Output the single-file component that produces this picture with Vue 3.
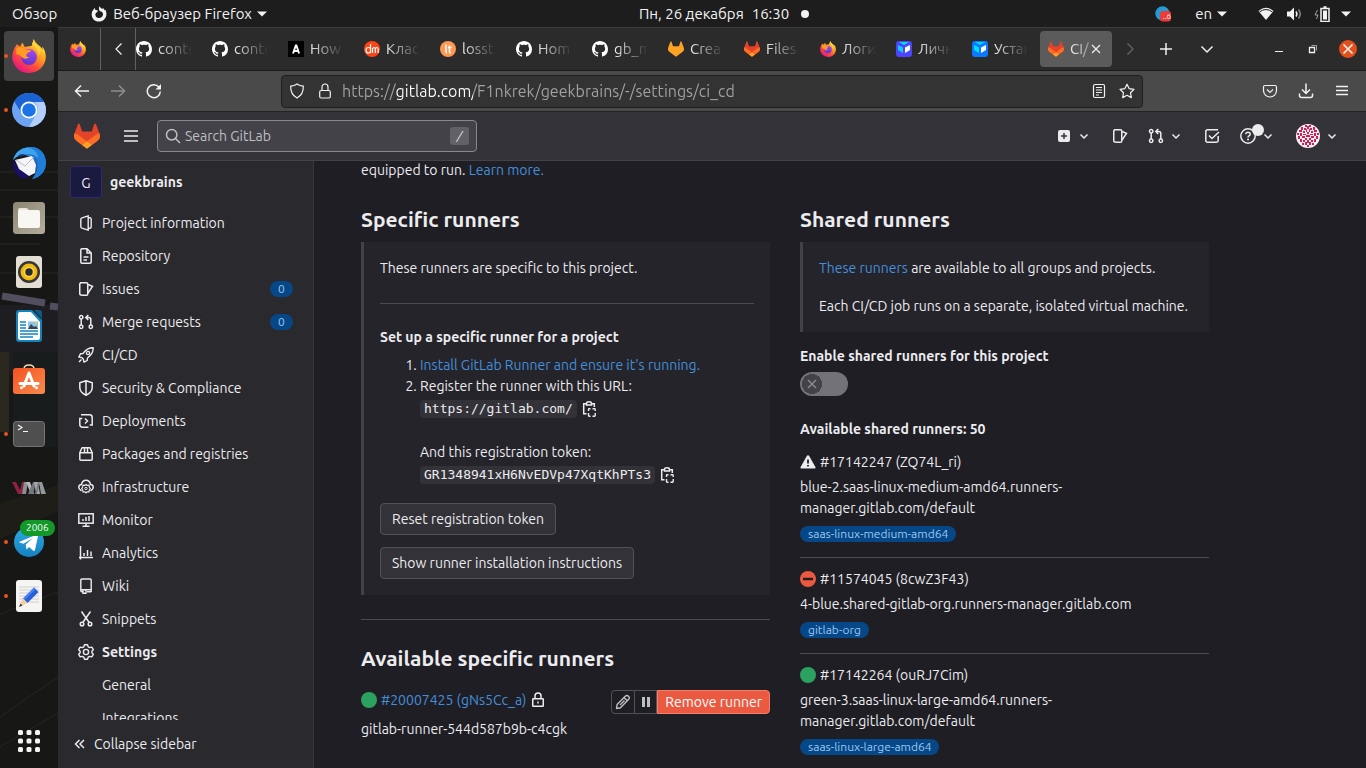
<script setup>
import { h, ref } from 'vue'

const Icon = (props) =>
  h('svg', { class: 'icon', width: props.size || 16, height: props.size || 16, 'aria-hidden': 'true' }, [
    h('use', { href: '#' + props.name })
  ])

const tabs = [
  { icon: 'github', title: 'conte' },
  { icon: 'github', title: 'conte' },
  { icon: 'letter-a', title: 'How' },
  { icon: 'dm', title: 'Клас' },
  { icon: 'lt', title: 'losst.' },
  { icon: 'github', title: 'Hom' },
  { icon: 'github', title: 'gb_m' },
  { icon: 'fox-flat', title: 'Crea' },
  { icon: 'tanuki', title: 'Files' },
  { icon: 'firefox', title: 'Логи' },
  { icon: 'cube-violet', title: 'Личн' },
  { icon: 'cube-blue', title: 'Устан' },
  { icon: 'tanuki', title: 'CI/', active: true }
]

const dock = [
  { icon: 'firefox', label: 'Firefox', running: true, active: true },
  { icon: 'chromium', label: 'Chromium', running: true },
  { icon: 'thunderbird', label: 'Thunderbird' },
  { icon: 'files', label: 'Files' },
  { icon: 'rhythmbox', label: 'Rhythmbox' },
  { icon: 'writer', label: 'Writer' },
  { icon: 'store', label: 'Software' },
  { icon: 'terminal', label: 'Terminal', running: true },
  { icon: 'vmm', label: 'Virtual machines' },
  { icon: 'telegram', label: 'Telegram', running: true, count: '2006' },
  { icon: 'editor', label: 'Text editor', running: true }
]

const menu = [
  { icon: 'project', text: 'Project information' },
  { icon: 'doc-text', text: 'Repository' },
  { icon: 'issues', text: 'Issues', count: 0 },
  { icon: 'git-merge', text: 'Merge requests', count: 0 },
  { icon: 'rocket', text: 'CI/CD' },
  { icon: 'shield', text: 'Security & Compliance' },
  { icon: 'deployments', text: 'Deployments' },
  { icon: 'package', text: 'Packages and registries' },
  { icon: 'cloud-gear', text: 'Infrastructure' },
  { icon: 'monitor', text: 'Monitor' },
  { icon: 'chart', text: 'Analytics' },
  { icon: 'book', text: 'Wiki' },
  { icon: 'snippet', text: 'Snippets' },
  { icon: 'settings', text: 'Settings', current: true },
  { text: 'General' },
  { text: 'Integrations' }
]

const runners = [
  { icon: 'warning', id: '#17142247 (ZQ74L_ri)', name: 'blue-2.saas-linux-medium-amd64.runners-manager.gitlab.com/default', tag: 'saas-linux-medium-amd64' },
  { icon: 'offline', id: '#11574045 (8cwZ3F43)', name: '4-blue.shared-gitlab-org.runners-manager.gitlab.com', tag: 'gitlab-org' },
  { icon: 'online', id: '#17142264 (ouRJ7Cim)', name: 'green-3.saas-linux-large-amd64.runners-manager.gitlab.com/default', tag: 'saas-linux-large-amd64' }
]

const url = ref('https://gitlab.com/F1nkrek/geekbrains/-/settings/ci_cd')
const search = ref('')
const shared = ref(false)
</script>

<template>
  <svg class="sheet" aria-hidden="true">
    <defs>
      <linearGradient id="ff-body" x1="0.85" y1="0.1" x2="0.2" y2="0.95">
        <stop offset="0" stop-color="#ffe83a" /><stop offset="0.35" stop-color="#ff9a1f" /><stop offset="0.65" stop-color="#ff4a3d" /><stop offset="1" stop-color="#e3118a" />
      </linearGradient>
      <linearGradient id="ff-core" x1="0.6" y1="0" x2="0.4" y2="1">
        <stop offset="0" stop-color="#a64bf4" /><stop offset="1" stop-color="#5b35c9" />
      </linearGradient>
      <linearGradient id="tb-body" x1="0" y1="0" x2="1" y2="1">
        <stop offset="0" stop-color="#2b9be8" /><stop offset="1" stop-color="#1a3f9c" />
      </linearGradient>
      <linearGradient id="store-body" x1="0" y1="0" x2="1" y2="1">
        <stop offset="0" stop-color="#f4511e" /><stop offset="1" stop-color="#f78d4f" />
      </linearGradient>
      <linearGradient id="tg-body" x1="0" y1="0" x2="0" y2="1">
        <stop offset="0" stop-color="#2fa8e0" /><stop offset="1" stop-color="#1482c2" />
      </linearGradient>
      <linearGradient id="files-body" x1="0" y1="0" x2="1" y2="1">
        <stop offset="0" stop-color="#8d8573" /><stop offset="1" stop-color="#b5ad9c" />
      </linearGradient>
    </defs>

    <symbol id="firefox" class="art" viewBox="0 0 32 32">
      <path fill="url(#ff-body)" d="M20.5 0c-.6 2.700-1.600 4-1.800 6.300L12 7.500 10 3.500C8.500 4.600 8 6 7.800 7.300L4.600 5C2.300 8.200.2 12.500.2 17A15.700 15.200 0 0 0 16 32c8.700 0 15.800-6.700 15.800-15.200 0-3-.8-6-2.300-8.300l-1-1.500.3 3C27.500 6.500 22 5 20.500 0Z" />
      <circle cx="16" cy="17" r="7.500" fill="url(#ff-core)" />
      <path fill="#ff9b22" d="M4 9c4-2.500 7-1 9.500 1.200l4.500.3c-.5 2-4 2.300-4.500 4.300-.3 1.600 1 2.600 3 2.400-3.500 2.600-7 1-8.500-1.700L4 14Z" />
      <path fill="#ffd23b" d="M19 5c3.500 3 6 6 6 11 3-4 2-8-1-10.500C21.500 3.500 20.500 1.500 20.500 0Z" />
    </symbol>
    <symbol id="chromium" class="art" viewBox="0 0 34 34">
      <circle cx="17" cy="17" r="17" fill="#6da3f3" />
      <path fill="#1b62d4" d="M2.300 8.500A17 17 0 0 1 32 9H17a8 8 0 0 0-7.600 11Z" />
      <path fill="#b3cffa" d="M32 9a17 17 0 0 1-15 25l7-12.500A8.400 8.400 0 0 0 22 9Z" />
      <circle cx="17" cy="17" r="8.500" fill="#fff" /><circle cx="17" cy="17" r="6.800" fill="#1a73e8" />
    </symbol>
    <symbol id="thunderbird" class="art" viewBox="0 0 34 34">
      <path fill="url(#tb-body)" d="M4 9C7 3 14 0 19 0c9 0 15 7 15 16 0 8-6 15-14 16 4-4 5-12 1-18C17 8 10 6 4 9Z" />
      <path fill="#1f7fd8" d="M4 9C9 2 22 3 25 13c2 8-1 15-5 19 9-1 14-9 14-16C34 7 28 0 19 0 13 0 7 3 4 9Z" />
      <path fill="#191063" d="M1 12c-2 9 3 17 10 20l9-4L4 18Z" />
      <path fill="#f5f5f7" d="M3 13 20 9l4 9-1 8-6 3-10-7Z" /><path d="m4 13 9 6 9-9" fill="none" stroke="#bcbcc8" />
      <path fill="#3fa2ee" d="M1 13C3 5 10 0 17 1c6 1 9 6 9 10C21 6 9 5 1 13Z" />
      <path fill="#1b2f70" d="M6 9c2-2 5-2 7-1-2 2-5 2-7 1Z" />
    </symbol>
    <symbol id="files" class="art" viewBox="0 0 34 34">
      <rect x="1" y="1" width="32" height="32" rx="3.500" fill="url(#files-body)" />
      <path fill="#eae6dc" d="M6 9q0-2 2-2h6q1.500 0 2 1l1 2H6Z" /><rect x="6" y="9" width="22" height="18" rx="2" fill="#f8f7f4" />
    </symbol>
    <symbol id="rhythmbox" class="art" viewBox="0 0 34 34">
      <rect x="4" y="1" width="26" height="32" rx="3" fill="#e3ded3" /><circle cx="17" cy="17" r="11" fill="#333539" />
      <circle cx="17" cy="17" r="8.500" fill="#f2b90c" /><circle cx="17" cy="17" r="5.500" fill="#f7cf52" /><circle cx="17" cy="17" r="3.700" fill="#282b30" />
    </symbol>
    <symbol id="writer" class="art" viewBox="-1 -1 34 34">
      <path fill="#1582b9" d="M6 0h13l10 10v19q0 3-3 3H6q-3 0-3-3V3q0-3 3-3Z" /><path fill="#0d5c86" d="M21 0h5q3 0 3 3v6Z" />
      <path fill="#fbfdfe" d="M5 4q0-2 2-2h11l9 10v16q0 2-2 2H7q-2 0-2-2Z" />
      <path d="M7 12h6M7 15h6M7 18h6M7 21h18M7 24h18M7 27h13" stroke="#1582b9" stroke-width="1.500" /><rect x="15" y="11.500" width="10" height="7.500" fill="#86c7ea" /><path fill="#3d454c" d="m15 19 3-5 3 3 2-1 2 3Z" />
      <circle cx="23" cy="13" r="1.200" fill="#f1c83a" />
    </symbol>
    <symbol id="store" class="art" viewBox="-1 0 34 34">
      <path d="M11 6q0-4 5-4t5 4" fill="none" stroke="#f5d9a8" stroke-width="1.500" /><rect y="5" width="32" height="26" rx="3" fill="url(#store-body)" />
      <path d="m11 23 5-13 5 13M7 20.500h18" fill="none" stroke="#fff" stroke-width="3" stroke-linecap="round" stroke-linejoin="round" /><path d="M9 23.500 8 26M23 23.500l1 2.500" stroke="#fff" stroke-width="2.500" />
    </symbol>
    <symbol id="terminal" class="art" viewBox="-1 -1 34 34">
      <rect x="0.500" y="3.500" width="31" height="25" rx="3" fill="#4f4f4f" stroke="#757575" /><path d="m5 7 4 2.500L5 12M10 13.500h5" fill="none" stroke="#f4f4f4" stroke-width="1.200" />
    </symbol>
    <symbol id="vmm" class="art" viewBox="0 0 34 34">
      <path fill="#8c2343" d="M0 11h4l4 8 2-8h4l-4 12H6Z" /><path fill="#8b8f93" d="m12 11 4 0-2 12h-4Z" /><path fill="#b4b7ba" d="m14 11 4 0 4 12h-3Z" />
      <path fill="#74787b" d="m21 11 3 0-3 12h-5Z" /><path fill="#a3a7aa" d="m22 11 4 0 2 12h-4Z" /><path fill="#75797c" d="m28 11-3 12h-2l3-12Z" /><path fill="#94989b" d="m27 11 3 0 4 12h-5Z" />
    </symbol>
    <symbol id="telegram" class="art" viewBox="-1 -1 34 34">
      <circle cx="16" cy="16" r="15" fill="url(#tg-body)" /><path fill="#fff" d="m6 16 18-7.500q1.500-.5 1 1.500l-3 14q-.4 1.500-2 .5l-4-3.500-2.500 2.500-.8-5L20 12l-9.500 5.700-4-1.200Z" />
    </symbol>
    <symbol id="editor" class="art" viewBox="-1 -1 34 34">
      <rect x="3" width="26" height="32" rx="3" fill="#f6f5f4" /><path d="M6 7h20M6 10h20M6 13h20M6 16h20M6 19h20M6 22h20" stroke="#cfcfcf" />
      <path fill="#2a5fd8" d="M21 7.500 25.500 12 14.500 23 10 18.500Z" /><path fill="#4c85f5" d="M21 7.500 22.500 9 11.500 20 10 18.500Z" /><path fill="#f3cfa0" d="m10 18.500 4.500 4.500L6 27Z" /><path fill="#333" d="m7.500 23.500 2 2L6 27Z" />
    </symbol>
    <symbol id="apps" class="art" viewBox="0 0 24 24">
      <g fill="#f4f4f4"><rect x="1" y="1" width="5" height="5" rx="1.500" /><rect x="9.500" y="1" width="5" height="5" rx="1.500" /><rect x="18" y="1" width="5" height="5" rx="1.500" /><rect x="1" y="9.500" width="5" height="5" rx="1.500" /><rect x="9.500" y="9.500" width="5" height="5" rx="1.500" /><rect x="18" y="9.500" width="5" height="5" rx="1.500" /><rect x="1" y="18" width="5" height="5" rx="1.500" /><rect x="9.500" y="18" width="5" height="5" rx="1.500" /><rect x="18" y="18" width="5" height="5" rx="1.500" /></g>
    </symbol>

    <symbol id="github" class="art" viewBox="0 0 16 16">
      <path fill="#fff" d="M8 0C3.580 0 0 3.580 0 8c0 3.540 2.290 6.530 5.470 7.590.4.070.55-.17.55-.38 0-.19-.01-.82-.01-1.490-2.010.37-2.530-.49-2.690-.94-.09-.23-.48-.94-.82-1.130-.28-.15-.68-.52-.01-.53.63-.01 1.080.58 1.230.82.72 1.210 1.870.87 2.330.66.07-.52.28-.87.51-1.070-1.780-.2-3.640-.89-3.640-3.950 0-.87.31-1.590.82-2.150-.08-.2-.36-1.020.08-2.120 0 0 .67-.21 2.200.82.64-.18 1.320-.27 2-.27s1.360.09 2 .27c1.530-1.040 2.200-.82 2.200-.82.44 1.100.16 1.920.08 2.120.51.56.82 1.270.82 2.150 0 3.070-1.870 3.750-3.650 3.950.29.25.54.73.54 1.480 0 1.070-.01 1.930-.01 2.200 0 .21.15.46.55.38A8.010 8.010 0 0 0 16 8c0-4.420-3.580-8-8-8Z" />
    </symbol>
    <symbol id="tanuki" class="art" viewBox="0 0 25 24">
      <path fill="#E24329" d="m24.507 9.500-.034-.09L21.082.562a.896.896 0 0 0-1.694.091l-2.290 7.010H7.825L5.535.653a.898.898 0 0 0-1.694-.09L.451 9.411.416 9.500a6.297 6.297 0 0 0 2.090 7.278l.012.01.03.022 5.160 3.867 2.560 1.935 1.554 1.176a1.051 1.051 0 0 0 1.268 0l1.555-1.176 2.560-1.935 5.197-3.890.014-.01A6.297 6.297 0 0 0 24.507 9.500Z" />
      <path fill="#FC6D26" d="m24.507 9.500-.034-.09a11.440 11.440 0 0 0-4.560 2.051l-7.447 5.632 4.742 3.584 5.197-3.890.014-.01A6.297 6.297 0 0 0 24.507 9.500Z" />
      <path fill="#FCA326" d="m7.707 20.677 2.560 1.935 1.555 1.176a1.051 1.051 0 0 0 1.268 0l1.555-1.176 2.560-1.935-4.743-3.584-4.755 3.584Z" />
      <path fill="#FC6D26" d="M5.010 11.461a11.430 11.430 0 0 0-4.560-2.050L.416 9.500a6.297 6.297 0 0 0 2.090 7.278l.012.01.03.022 5.160 3.867 4.745-3.584-7.444-5.632Z" />
    </symbol>
    <symbol id="fox-flat" class="art" viewBox="0 0 25 24">
      <path fill="#fca326" d="m24.507 9.500-.034-.09L21.082.562a.896.896 0 0 0-1.694.091l-2.290 7.010H7.825L5.535.653a.898.898 0 0 0-1.694-.09L.451 9.411.416 9.500a6.297 6.297 0 0 0 2.090 7.278l5.202 3.899 4.114 3.111a1.051 1.051 0 0 0 1.268 0l4.115-3.111 5.197-3.890A6.297 6.297 0 0 0 24.507 9.500Z" />
    </symbol>
    <symbol id="letter-a" class="art" viewBox="0 0 16 16">
      <rect width="16" height="16" fill="#000" /><path d="m5 12.500 2.800-8h.6l2.700 8M5.500 10h5" fill="none" stroke="#fff" stroke-width="1.900" />
    </symbol>
    <symbol id="dm" class="art" viewBox="0 0 16 16">
      <circle cx="8" cy="8" r="8" fill="#ff4313" /><path d="M6.500 3v9M6.500 8q-.5-1.500-2-1.500-2.500 0-2.500 2.700T4.500 12q1.500 0 2-1.500M8.500 12V7M8.500 8q.5-1.500 1.500-1.500t1.300 1.500v4M11.300 8q.5-1.500 1.600-1.500T14.200 8v4" fill="none" stroke="#fff" stroke-width="1.200" />
    </symbol>
    <symbol id="lt" class="art" viewBox="0 0 16 16">
      <circle cx="8" cy="8" r="8" fill="#ff9851" /><path d="M6 3.500V11q0 1 1 1M9.500 4.500V11q0 1 1.500 1M8 6.500h3.500" fill="none" stroke="#fff" stroke-width="1.500" />
    </symbol>
    <symbol id="cube-violet" class="art" viewBox="0 0 16 16">
      <rect width="16" height="16" rx="3" fill="#4b45ff" /><path fill="#00e0e8" d="M3 1h10L8 4Z" /><path fill="#12cdf0" d="m2 4 5 2.500V12L2 9Z" /><path fill="#fff" d="M9 6.500 14 4v5l-5 3Z" />
    </symbol>
    <symbol id="cube-blue" class="art" viewBox="0 0 16 16">
      <rect width="16" height="16" rx="3" fill="#0a78ff" /><path fill="#00d8f0" d="M3 1h10L8 4Z" /><path fill="#00e0f5" d="m2 4 5 2.500V12L2 9Z" /><path fill="#fff" d="M9 6.500 14 4v5l-5 3Z" />
    </symbol>
    <symbol id="firefox-mono" class="art" viewBox="0 0 16 16">
      <path fill="#f2f2f2" fill-rule="evenodd" d="M8.700 0c0 1.500 1.500 2.300 2.800 3.300l.2-1.500c1 .8 1.700 1.700 2 2.700l.8-.7c2 4.600.5 8.200-1.900 10.100-3.300 2.600-7.700 2-10-.5C.300 10.800.2 7.400 1.500 4.400l.4.700C2.300 3.500 3 2.600 4 2l.1 1.800 2.700.8c.3 1.700-1.900 1.500-2.300 3.200-.6 2.300 1 4.200 3.200 4.300 2.500.1 4.500-1.700 4.300-4.100-.1-1.900-1.500-2.500-3-2.700C7.700 4 7.500 1.700 8.700 0Z" />
    </symbol>

    <symbol id="chevron-down" viewBox="0 0 16 16"><path d="m4.500 6.500 3.500 3.500 3.500-3.500" /></symbol>
    <symbol id="chevron-left" viewBox="0 0 16 16"><path d="m10.500 2.500-5.500 5.500 5.500 5.500" /></symbol>
    <symbol id="chevron-right" viewBox="0 0 16 16"><path d="m5.500 2.500 5.500 5.500-5.500 5.500" /></symbol>
    <symbol id="chevron-wide" viewBox="0 0 16 16"><path d="m2.500 5.500 5.500 5.500 5.500-5.500" /></symbol>
    <symbol id="chevrons" viewBox="0 0 16 16"><path d="M7.500 4 3.500 8l4 4M12 4 8 8l4 4" /></symbol>
    <symbol id="plus" viewBox="0 0 16 16"><path d="M8 2v12M2 8h12" /></symbol>
    <symbol id="cross" viewBox="0 0 16 16"><path d="m4 4 8 8M12 4l-8 8" /></symbol>
    <symbol id="minus" viewBox="0 0 16 16"><path d="M4 10.500h8" stroke-width="1" /></symbol>
    <symbol id="restore" viewBox="0 0 16 16"><path d="M4.500 6.500h5v5h-5Z" stroke-width="1.300" /><path d="M6.500 4.500h5v5" stroke-opacity="0.600" stroke-width="1" /></symbol>
    <symbol id="arrow-left" viewBox="0 0 16 16"><path d="M15 8H2M7 2.500 1.500 8 7 13.500" /></symbol>
    <symbol id="arrow-right" viewBox="0 0 16 16"><path d="M1 8h13M9 2.500l5.500 5.500L9 13.500" /></symbol>
    <symbol id="reload" viewBox="0 0 16 16"><path d="M14.300 8.500A6.500 6.500 0 1 1 12.800 4" /><path d="M9.500 6.500H15V1Z" fill="currentColor" stroke="none" /></symbol>
    <symbol id="url-shield" viewBox="0 0 16 16"><path d="M8 1c2 1.500 4 2 6.300 2.200C14.500 8.500 12.500 12.500 8 15 3.500 12.500 1.500 8.500 1.700 3.200 4 3 6 2.500 8 1Z" /></symbol>
    <symbol id="url-lock" viewBox="0 0 16 16"><rect x="2.700" y="7.500" width="10.600" height="7.500" rx="1.500" /><path d="M5 7.500V4a3 3 0 0 1 6 0v3.500" /></symbol>
    <symbol id="reader" viewBox="0 0 16 16"><rect x="2.500" y="1.500" width="11" height="13" rx="1.500" /><path d="M5 4.500h6M5 7h6M5 9.500h6M5 12h3" /></symbol>
    <symbol id="star" viewBox="0 0 16 16"><path d="m8 1.200 2.100 4.400 4.900.7-3.500 3.400.8 4.900L8 12.300l-4.300 2.300.8-4.900L1 6.300l4.900-.7Z" stroke-linejoin="round" /></symbol>
    <symbol id="pocket" viewBox="0 0 16 16"><path d="M3 2.500h10q1.500 0 1.500 1.500v3.500a6.500 6.500 0 0 1-13 0V4q0-1.500 1.500-1.500Z" /><path d="M5 6.500 8 9.500l3-3" /></symbol>
    <symbol id="download" viewBox="0 0 16 16"><path d="M8 .5v9.500M4 6.500l4 4 4-4M1.500 10.500v2q0 2 2 2h9q2 0 2-2v-2" /></symbol>
    <symbol id="burger" viewBox="0 0 16 16"><path d="M1 3h14M1 8h14M1 13h14" /></symbol>
    <symbol id="menu-lines" viewBox="0 0 16 16"><path d="M2 3.500h12M2 7.500h12M2 11.500h12" /></symbol>
    <symbol id="search" viewBox="0 0 16 16"><circle cx="6.700" cy="6.700" r="5.200" /><path d="m10.500 10.500 4.500 4.500" /></symbol>

    <symbol id="plus-square" viewBox="0 0 16 16"><rect x="2" y="2" width="12" height="12" rx="2" fill="#ececef" stroke="none" /><path d="M8 5v6M5 8h6" stroke="#333238" /></symbol>
    <symbol id="issues" viewBox="0 0 16 16"><path d="M2.500 1.750h6q1.250 0 1.250 1.250v10q0 1.250-1.250 1.250h-4q-2.750 0-2.750-1.500V3Z" /><path d="M10 3.500 14.500 5.300 10 12" /></symbol>
    <symbol id="git-merge" viewBox="0 0 16 16"><circle cx="3.200" cy="3.200" r="1.700" /><circle cx="3.200" cy="12.800" r="1.700" /><circle cx="12.800" cy="12.800" r="1.700" /><path d="M3.200 5v6M12.800 11V5.500q0-2-2-2H8M10.300 1 7.800 3.500 10.300 6" /></symbol>
    <symbol id="todo" viewBox="0 0 16 16"><path d="M14.200 8v4.500q0 1.700-1.700 1.700h-9q-1.700 0-1.700-1.700v-9q0-1.700 1.700-1.700h10.500" /><path d="m5 7.500 3 3L15 4" /></symbol>
    <symbol id="question" viewBox="0 0 16 16"><circle cx="8" cy="8" r="7.200" /><path d="M5.800 6.300q.2-2 2.200-2 2.200 0 2.200 1.900 0 1-1.200 1.700-1 .6-1 1.500" /><circle cx="8" cy="11.500" r="1" fill="currentColor" stroke="none" /></symbol>
    <symbol id="identicon" class="art" viewBox="0 0 24 24">
      <circle cx="12" cy="12" r="12" fill="#fbeff3" />
      <path fill="#cc1f55" d="M9 1h2v2H9ZM13 1h2v2h-2ZM11 2h2v3h-2ZM5 3h2v3H5ZM17 3h2v3h-2ZM8 4h2v2H8ZM14 4h2v2h-2ZM10 5h1v3h-1ZM13 5h1v3h-1ZM3 6h3v2H3ZM18 6h3v2h-3ZM7 7h2v2H7ZM15 7h2v2h-2ZM1 9h2v2H1ZM21 9h2v2h-2ZM4 9h2v3H4ZM18 9h2v3h-2ZM7 10h3v1H7ZM14 10h3v1h-3ZM11 8h2v2h-2ZM10 11h4v2h-4ZM2 12h2v3H2ZM20 12h2v3h-2ZM6 12h3v2H6ZM15 12h3v2h-3ZM9 14h2v2H9ZM13 14h2v2h-2ZM4 15h2v3H4ZM18 15h2v3h-2ZM7 16h2v2H7ZM15 16h2v2h-2ZM11 16h2v3h-2ZM9 18h2v3H9ZM13 18h2v3h-2ZM6 19h2v2H6ZM16 19h2v2h-2ZM11 21h2v2h-2Z" />
    </symbol>

    <symbol id="project" viewBox="0 0 16 16"><path d="M10.200.9v14.200L4 13.200q-1.200-.4-1.200-1.600V4.400Q2.800 3.200 4 2.800ZM10.200 2.700h1.500q1.500 0 1.500 1.500v7.600q0 1.500-1.500 1.500h-1.500" stroke-width="1.400" /></symbol>
    <symbol id="doc-text" viewBox="0 0 16 16"><path d="M9 .8H4Q2.800.8 2.800 2v12q0 1.200 1.200 1.200h8q1.200 0 1.200-1.200V5ZM9 .8V5h4.200M5.500 9h5M5.500 12H9" /></symbol>
    <symbol id="rocket" viewBox="0 0 16 16"><path d="M15.200.8C10.500.6 8 2.500 5 6.500L2.500 6.800.8 10l2.900.6L5.400 12.300 6 15.200l3.200-1.700.3-2.500c4-3 5.900-5.500 5.700-10.200ZM1 15l2.500-2.500" stroke-width="1.400" stroke-linejoin="round" /><circle cx="10" cy="6" r="1.600" stroke-width="1.300" /></symbol>
    <symbol id="shield" viewBox="0 0 16 16"><path d="m8 .8 6.200 2v4.700q0 4.800-6.200 7.700-6.200-2.900-6.200-7.700V2.800ZM8 1v14" stroke-linejoin="round" /></symbol>
    <symbol id="deployments" viewBox="0 0 16 16"><path d="M3 1.800h8.500q2.700 0 2.700 2.700V12h-2.500M10.500 14.200h-6q-2.700 0-2.700-2.700V5.500h2.500M7 5.500 9.500 8 7 10.500" /></symbol>
    <symbol id="package" viewBox="0 0 16 16"><path d="M4 1.800h8l2.200 5v6.400q0 1-1 1H2.800q-1 0-1-1V6.800ZM1.800 6.800h12.400M6.500 2v4.500M9.500 2v4.500" stroke-linejoin="round" /></symbol>
    <symbol id="cloud-gear" viewBox="0 0 16 16"><path d="M3 11.500C-.5 9.500.5 5.500 3.500 5.500 4 2.500 6 1.200 8 1.200s4 1.300 4.500 4.300c3 0 4 4 .5 6" stroke-linecap="round" /><path d="m8 5.500 1 .9 2-.2.300 1.800 1 1.500-1 1.500-.3 1.900-2-.1-1 1-1-1-2 .1-.3-1.900-1-1.500 1-1.500L5 6.200l2 .2Z" stroke-width="1.200" /><circle cx="8" cy="9.500" r="1.200" stroke-width="1" /></symbol>
    <symbol id="monitor" viewBox="0 0 16 16"><rect x="0.800" y="1.800" width="14.400" height="9.400" /><path d="M8 11v3M4.500 14.200h7M5 7v2M8 5v4M11 4v5" /></symbol>
    <symbol id="chart" viewBox="0 0 16 16"><path d="M2.500 1v13.500M1 12.500h14M6 8v3M9.500 5v6M13 6.500V11" /></symbol>
    <symbol id="book" viewBox="0 0 16 16"><path d="M4 1h8q1.200 0 1.200 1.200v9.600H4q-1.200 0-1.200 1t1.200 1h1M2.800 13V2.200Q2.800 1 4 1M9 13.800h4.200M13.200 11v3M5 12v4l1.500-1L8 16v-4" stroke-width="1.400" /></symbol>
    <symbol id="snippet" viewBox="0 0 16 16"><circle cx="4" cy="13" r="1.800" /><circle cx="12" cy="13" r="1.800" /><path d="m3.500.5 7.700 11M12.500.5 4.800 11.500" /></symbol>
    <symbol id="settings" viewBox="0 0 16 16"><path d="M6.500.8h3l.7 2 1.500.8 2.100-.5 1.500 2.600L13.900 7.200v1.600l1.400 1.500-1.500 2.600-2.100-.5-1.500.8-.7 2h-3l-.7-2-1.500-.8-2.100.5L.7 10.300 2.100 8.800V7.200L.7 5.700l1.500-2.600 2.100.5 1.500-.8Z" stroke-width="1.400" stroke-linejoin="round" /><circle cx="8" cy="8" r="2.600" stroke-width="1.400" /></symbol>
    <symbol id="copy" viewBox="0 0 16 16"><path d="M5 2.700H2.700v10H5.500M10.500 2.700h2.800V6M5.500 4V2.500q0-1.700 2.500-1.700t2.500 1.700V4Z" /><path d="M7.500 10V8.500q0-.7.700-.7H9.500M11.500 7.800h2q.7 0 .7.700V10M14.200 12v2.500q0 .7-.7.700h-2M9.500 15.200H8.200q-.7 0-.7-.7V12" stroke-width="1.400" /></symbol>
    <symbol id="lock" viewBox="0 0 16 16"><rect x="2.750" y="6.750" width="10.500" height="7.500" rx="0.500" /><path d="M5 6.500V4a3 3 0 0 1 6 0v2.500M8 9.500v2" /></symbol>
    <symbol id="pencil" viewBox="0 0 16 16"><path d="m1.500 14.500.6-4L10.500 2q1.500-1.300 3 .2t.2 3L5.500 13.800ZM9 3.500 12.500 7M5 11l4.500-4.500" stroke-width="1.400" stroke-linejoin="round" /></symbol>
    <symbol id="pause" viewBox="0 0 16 16"><path d="M5.500 3v10M10.500 3v10" stroke-width="3" /></symbol>
    <symbol id="warning" viewBox="0 0 16 16"><path d="M8 1.200q.8 0 1.200.7l6.200 11q.8 1.600-1 1.600H1.600q-1.800 0-1-1.600l6.200-11Q7.200 1.200 8 1.200Z" fill="#ececef" stroke="none" /><path d="M8 5.500v4M8 11v1.600" stroke="#1f1e24" stroke-width="1.800" /></symbol>
    <symbol id="offline" viewBox="0 0 16 16"><circle cx="8" cy="8" r="8" fill="#ec5941" stroke="none" /><path d="M3 8h10" stroke="#1f1e24" stroke-width="2.500" /></symbol>
    <symbol id="online" viewBox="0 0 16 16"><circle cx="8" cy="8" r="8" fill="#2da160" stroke="none" /></symbol>

    <symbol id="tray-chat" viewBox="0 0 16 16"><circle cx="7.500" cy="7.500" r="7.200" fill="#239bd7" stroke="none" /><rect x="5" y="5" width="11" height="10.500" rx="3" fill="#ef3b38" stroke="none" /></symbol>
    <symbol id="wifi" viewBox="0 0 16 16"><path d="M.5 5Q8-1.500 15.500 5L8 14Z" fill="#f2f2f2" stroke="none" /><path d="M1.500 6Q8 1 14.500 6" stroke="#1d1d1d" stroke-width="1" /></symbol>
    <symbol id="volume" viewBox="0 0 16 16"><path d="M1 5.500h3L8 1.500v13l-4-4H1Z" fill="#f2f2f2" stroke="none" /><path d="M10 5.500q1.800 2.500 0 5" /><path d="M12.500 3.500q3.500 4.500 0 9" stroke-opacity="0.500" /></symbol>
    <symbol id="battery" viewBox="0 0 16 16"><path d="M7 2.500h8v13H7ZM9.500 1h3" /><rect x="9" y="4.500" width="4" height="9" fill="#f2f2f2" stroke="none" /><path d="m3.500 4-2.500 5h3L2.500 13" stroke-width="1" stroke-opacity="0.600" /></symbol>
    <symbol id="caret" viewBox="0 0 16 16"><path d="M3 5.500h10l-5 5Z" fill="#f2f2f2" stroke="none" /></symbol>
  </svg>

  <div class="desktop">
    <header class="topbar">
      <div class="topbar-left">
        <button class="plain">Обзор</button>
        <button class="plain app-menu"><Icon name="firefox-mono" />Веб-браузер Firefox<Icon name="caret" /></button>
      </div>
      <button class="plain clock"><span>Пн, 26 декабря</span><span>16:30</span><i class="clock-dot"></i></button>
      <div class="tray">
        <span class="tray-chat"><Icon name="tray-chat" /><small>..6</small></span>
        <button class="plain lang">en<Icon name="caret" /></button>
        <button class="plain status" aria-label="System"><Icon name="wifi" /><Icon name="volume" /><Icon name="battery" /><Icon name="caret" /></button>
      </div>
    </header>

    <div class="workspace">
      <nav class="dock" aria-label="Dock">
        <svg class="wallpaper" viewBox="0 0 58 741" preserveAspectRatio="none" aria-hidden="true">
          <rect width="58" height="741" fill="#171716" />
          <path d="M0 145h58M0 163h58M0 190h58M0 217h40M0 246h58" stroke="#2b2922" />
          <path d="M0 278h58v70H0Z" fill="#1e1e22" /><path d="m2 269 43 7M50 279l8 1" stroke="#524e5f" stroke-width="7" />
          <path d="M0 325h9v80H0Z" fill="#2b2820" /><path d="M13 325h45v95H13Z" fill="#191c1c" />
          <path d="m0 476 58-18v26L0 512Z" fill="#1f1d17" /><path d="m0 587 58-22M0 690l58-40M0 720l58-34" stroke="#262522" />
        </svg>
        <button v-for="item in dock" :key="item.icon" class="dock-item" :class="{ active: item.active }" :aria-label="item.label">
          <i v-if="item.running" class="running"></i>
          <Icon :name="item.icon" :size="34" />
          <span v-if="item.count" class="dock-count">{{ item.count }}</span>
        </button>
        <button class="dock-item dock-apps" aria-label="Applications"><Icon name="apps" :size="24" /></button>
      </nav>

      <div class="browser">
        <div class="tabbar">
          <button class="pinned" aria-label="Firefox"><Icon name="firefox" /></button>
          <button class="scroll-left" aria-label="Scroll left"><Icon name="chevron-left" class="thin" /></button>
          <div class="tab-window">
            <div class="tabs" role="tablist">
              <div v-for="(tab, i) in tabs" :key="i" class="tab" :class="{ active: tab.active }">
                <button class="tab-main" role="tab"><Icon :name="tab.icon" /><span class="tab-title">{{ tab.title }}</span></button>
                <button v-if="tab.active" class="tab-close" aria-label="Close tab"><Icon name="cross" class="thin" /></button>
              </div>
            </div>
          </div>
          <button class="tool dim" aria-label="Scroll right"><Icon name="chevron-right" class="thin" /></button>
          <button class="tool" aria-label="New tab"><Icon name="plus" /></button>
          <button class="tool tool-wide" aria-label="List tabs"><Icon name="chevron-wide" /></button>
          <div class="window-buttons">
            <button aria-label="Minimise"><Icon name="minus" /></button>
            <button aria-label="Restore"><Icon name="restore" /></button>
            <button class="close" aria-label="Close"><Icon name="cross" :size="18" /></button>
          </div>
        </div>

        <div class="toolbar">
          <div class="nav-buttons">
            <button class="plain" aria-label="Back"><Icon name="arrow-left" /></button>
            <button class="plain faded" aria-label="Forward"><Icon name="arrow-right" /></button>
            <button class="plain" aria-label="Reload"><Icon name="reload" /></button>
          </div>
          <div class="urlbar">
            <Icon name="url-shield" class="thin" /><Icon name="url-lock" class="thin" />
            <input v-model="url" class="url" aria-label="Address" spellcheck="false" />
            <Icon name="reader" class="thin" /><Icon name="star" class="thin" />
          </div>
          <div class="toolbar-right">
            <button class="plain" aria-label="Pocket"><Icon name="pocket" class="thin" /></button>
            <button class="plain" aria-label="Downloads"><Icon name="download" /></button>
            <button class="plain" aria-label="Menu"><Icon name="menu-lines" /></button>
          </div>
        </div>

        <div class="gl-header">
          <a href="#" class="logo" aria-label="GitLab"><Icon name="tanuki" :size="26" /></a>
          <button class="plain gl-burger" aria-label="Main menu"><Icon name="burger" /></button>
          <label class="search">
            <Icon name="search" />
            <input v-model="search" type="text" placeholder="Search GitLab" aria-label="Search GitLab" />
            <kbd>/</kbd>
          </label>
          <div class="gl-actions">
            <button class="plain" aria-label="Create"><Icon name="plus-square" /><Icon name="chevron-down" /></button>
            <button class="plain" aria-label="Issues"><Icon name="issues" /></button>
            <button class="plain" aria-label="Merge requests"><Icon name="git-merge" /><Icon name="chevron-down" /></button>
            <button class="plain" aria-label="To-do"><Icon name="todo" /></button>
            <button class="plain help" aria-label="Help"><Icon name="question" /><i class="notice"></i><Icon name="chevron-down" /></button>
            <button class="plain user" aria-label="Account"><Icon name="identicon" :size="24" /><Icon name="chevron-down" /></button>
          </div>
        </div>

        <div class="page">
          <aside class="sidebar">
            <a href="#" class="context"><span class="avatar">G</span><strong>geekbrains</strong></a>
            <nav class="menu">
              <a v-for="item in menu" :key="item.text" href="#" class="menu-item" :class="{ current: item.current, sub: !item.icon }">
                <Icon v-if="item.icon" :name="item.icon" />
                <span>{{ item.text }}</span>
                <span v-if="item.count !== undefined" class="count">{{ item.count }}</span>
              </a>
            </nav>
            <button class="plain collapse"><Icon name="chevrons" />Collapse sidebar</button>
          </aside>

          <main class="content">
            <p class="intro">equipped to run. <a href="#">Learn more.</a></p>
            <div class="columns">
              <section>
                <h2>Specific runners</h2>
                <div class="callout">
                  <p>These runners are specific to this project.</p>
                  <hr />
                  <h3>Set up a specific runner for a project</h3>
                  <ol>
                    <li><a href="#">Install GitLab Runner and ensure it's running.</a></li>
                    <li>
                      Register the runner with this URL:
                      <div class="code-row"><code>https://gitlab.com/</code><button class="plain" aria-label="Copy URL"><Icon name="copy" /></button></div>
                      <div class="token">And this registration token:</div>
                      <div class="code-row"><code>GR1348941xH6NvEDVp47XqtKhPTs3</code><button class="plain" aria-label="Copy token"><Icon name="copy" /></button></div>
                    </li>
                  </ol>
                  <button class="btn">Reset registration token</button>
                  <button class="btn">Show runner installation instructions</button>
                </div>
                <hr class="section-line" />
                <h2 class="second">Available specific runners</h2>
                <div class="own-runner">
                  <div class="own-title"><Icon name="online" /><a href="#">#20007425 (gNs5Cc_a)</a><Icon name="lock" class="own-lock" /></div>
                  <div class="group">
                    <button class="edit" aria-label="Edit"><Icon name="pencil" /></button>
                    <button class="pause" aria-label="Pause"><Icon name="pause" /></button>
                    <button class="remove">Remove runner</button>
                  </div>
                </div>
                <p class="own-name">gitlab-runner-544d587b9b-c4cgk</p>
              </section>

              <section>
                <h2>Shared runners</h2>
                <div class="callout">
                  <p><a href="#">These runners</a> are available to all groups and projects.</p>
                  <p class="next">Each CI/CD job runs on a separate, isolated virtual machine.</p>
                </div>
                <label class="switch-label" for="shared-switch">Enable shared runners for this project</label>
                <span class="switch">
                  <input id="shared-switch" v-model="shared" type="checkbox" role="switch" />
                  <Icon name="cross" />
                </span>
                <h3 class="available">Available shared runners: 50</h3>
                <ul class="runners">
                  <li v-for="r in runners" :key="r.id">
                    <div class="runner-id"><Icon :name="r.icon" />{{ r.id }}</div>
                    <div class="runner-name">{{ r.name }}</div>
                    <span class="tag">{{ r.tag }}</span>
                  </li>
                </ul>
              </section>
            </div>
          </main>
        </div>
      </div>
    </div>
  </div>
</template>

<style>
html, body { background: #1f1e24; overflow: hidden; }
</style>

<style scoped>
.desktop, .desktop * { box-sizing: border-box; }
.desktop { height: 100vh; display: flex; flex-direction: column; overflow: hidden; font: 14px/20px Ubuntu, "Noto Sans", sans-serif; color: #ececef; }
.sheet { position: absolute; width: 0; height: 0; }
.icon { flex: none; display: block; fill: none; stroke: currentColor; stroke-width: 1.5px; }
.art { stroke: none; stroke-width: 1px; }
.thin { stroke-width: 1.2px; }
button { font: inherit; color: inherit; border: 0; padding: 0; margin: 0; background: none; }
.plain { display: flex; align-items: center; white-space: nowrap; }
a { color: #428fdc; text-decoration: none; }
h2, h3, p, ol, ul { margin: 0; padding: 0; }

.topbar { flex: none; height: 27px; display: grid; grid-template-columns: 639px 1fr auto; background: #1d1d1d; color: #f2f2f2; font-size: 15px; }
.topbar-left, .tray, .clock { display: flex; align-items: center; }
.topbar-left { padding-left: 12px; gap: 34px; }
.app-menu { gap: 6px; }
.app-menu .icon:last-child { margin-left: -4px; }
.clock { gap: 8px; }
.clock-dot { width: 8px; height: 8px; border-radius: 50%; background: #f2f2f2; margin-left: 4px; }
.tray { padding-right: 12px; }
.tray-chat { position: relative; margin-right: 24px; }
.tray-chat small { position: absolute; right: 0; bottom: 0; font-size: 8px; line-height: 10px; }
.lang { margin-right: 28px; gap: 2px; }
.status { gap: 12px; }
.status .icon:last-child { margin-left: -4px; }

.workspace { flex: 1; min-height: 0; display: flex; }
.dock { position: relative; flex: none; width: 58px; padding: 4px 4px 2px; display: flex; flex-direction: column; gap: 4px; overflow: hidden; }
.wallpaper { position: absolute; inset: 0; width: 100%; height: 100%; }
.dock-item { position: relative; flex: none; height: 50px; border-radius: 4px; display: flex; align-items: center; justify-content: center; }
.dock-item.active { background: #434343; }
.dock-apps { margin-top: auto; }
.running { position: absolute; left: 0; top: 23px; width: 4px; height: 4px; border-radius: 50%; background: #e95420; }
.dock-count { position: absolute; left: 16px; top: 3px; padding: 0 6px; border-radius: 8px; background: #12992a; font-size: 10px; line-height: 16px; color: #fff; }

.browser { flex: 1; min-width: 0; display: flex; flex-direction: column; }
.tabbar { flex: none; height: 44px; display: flex; align-items: stretch; background: #2b2b2b; border-top: 1px solid #3c3c3c; border-bottom: 1px solid #1c1c1c; color: #f0f0f0; }
.pinned { width: 43px; padding-left: 12px; border-right: 1px solid #616161; display: flex; align-items: center; }
.scroll-left { width: 35px; padding-left: 10px; border-right: 1px solid #616161; display: flex; align-items: center; }
.tab-window { overflow: hidden; }
.tabs { display: flex; gap: 4px; margin-left: -8px; padding: 3px 0; height: 100%; }
.tab { flex: none; width: 72px; padding: 0 8px; border-radius: 4px; display: flex; align-items: center; }
.tab.active { background: #5b5b5b; }
.tab-main { flex: none; display: flex; align-items: center; gap: 6px; }
.tab-title { font-size: 15px; white-space: nowrap; mask-image: linear-gradient(to right, #000 0, transparent 34px); }
.tab.active .tab-main { width: 40px; }
.tool { width: 36px; display: flex; align-items: center; justify-content: center; }
.tool-wide { width: 46px; }
.dim { opacity: 0.3; }
.window-buttons { margin-left: auto; display: flex; align-items: center; gap: 18px; padding-right: 9px; }
.window-buttons .close { border-radius: 50%; background: #e2501c; }

.toolbar { flex: none; height: 41px; display: flex; align-items: center; background: #4a4a4a; border-bottom: 1px solid #222; color: #f2f2f2; }
.nav-buttons { width: 223px; padding-left: 16px; display: flex; gap: 20px; }
.faded { opacity: 0.4; }
.urlbar { flex: 1; min-width: 0; height: 33px; display: flex; align-items: center; gap: 12px; padding: 0 7px; background: #333; border: 1px solid #1f1f1f; border-radius: 4px; }
.url { flex: 1; min-width: 0; margin-left: -3px; border: 0; outline: 0; padding: 0; font: 16px/20px Ubuntu, "Noto Sans", sans-serif; color: #a3a3a3; -webkit-text-fill-color: transparent; background: linear-gradient(to right, #a3a3a3 54px, #fff 54px, #fff 131px, #a3a3a3 131px) text; }
.toolbar-right { width: 223px; padding-right: 16px; display: flex; justify-content: flex-end; gap: 20px; }

.gl-header { flex: none; height: 49px; display: flex; align-items: center; background: #333238; border-bottom: 1px solid #434248; padding: 0 26px 0 16px; }
.gl-burger { margin: 0 18px 0 23px; }
.search { width: 320px; height: 32px; display: flex; align-items: center; gap: 4px; padding: 0 7px; background: #434248; border: 1px solid #89888d; border-radius: 4px; color: #bfbfc3; }
.search input { flex: 1; min-width: 0; border: 0; outline: 0; padding: 0; background: none; font: inherit; color: #ececef; }
.search input::placeholder { color: #bfbfc3; opacity: 1; }
kbd { width: 19px; height: 18px; border-radius: 3px; background: #626168; font: italic 12px/18px Ubuntu, "Noto Sans", sans-serif; text-align: center; color: #ececef; }
.gl-actions { margin-left: auto; display: flex; align-items: center; gap: 20px; }
.gl-actions .plain { gap: 4px; }
.help { position: relative; }
.notice { position: absolute; left: 12px; top: -4px; width: 12px; height: 12px; border-radius: 50%; background: #ececef; }

.page { flex: 1; min-height: 0; display: flex; }
.sidebar { flex: none; width: 256px; display: flex; flex-direction: column; background: #2a292e; border-right: 1px solid #38373d; }
.context { flex: none; display: flex; align-items: center; gap: 8px; padding: 5px 12px 8px; color: #ececef; }
.avatar { width: 32px; height: 32px; border: 1px solid #2f2a6b; border-radius: 4px; background: #1a1a40; line-height: 32px; text-align: center; }
.menu { flex: 1; min-height: 0; overflow: hidden; }
.menu-item { height: 33px; padding: 0 20px; display: flex; align-items: center; gap: 8px; color: #ececef; }
.menu-item.sub { padding-left: 44px; }
.menu-item.current { font-weight: 700; }
.count { margin-left: auto; width: 23px; height: 16px; border-radius: 8px; background: #064787; color: #9dc7f1; font-size: 12px; line-height: 16px; text-align: center; }
.collapse { flex: none; height: 48px; padding-left: 14px; gap: 6px; }

.content { flex: 1; min-width: 0; overflow: hidden; padding: 0 157px 0 47px; background: #1f1e24; }
.intro { line-height: 18px; }
.columns { display: grid; grid-template-columns: 1fr 1fr; gap: 30px; margin-top: 28px; }
section { min-width: 0; }
h2 { font-size: 21px; line-height: 24px; padding: 0 0 11px; }
h3 { font-size: 14px; line-height: 20px; }
.callout { background: #25242a; border-left: 3px solid #434248; padding: 16px; }
hr { margin: 0; border: 0; height: 1px; background: #4c4b51; }
.callout hr { margin: 25px 0 23px; }
.callout .next { margin-top: 18px; }
ol { padding-left: 40px; margin-top: 8px; line-height: 21px; }
.code-row { display: flex; align-items: center; gap: 4px; height: 24px; }
code { padding: 0 4px; border-radius: 4px; background: #333238; font: 13px/18px "DejaVu Sans Mono", monospace; }
.token { margin-top: 21px; }
.btn { display: block; height: 32px; padding: 0 11px; margin-top: 16px; border: 1px solid #535158; border-radius: 4px; background: #333238; }
.btn + .btn { margin-top: 12px; }
.section-line { margin-top: 24px; }
.second { margin-top: 26px; }
.own-runner { display: flex; justify-content: space-between; align-items: flex-start; margin-top: 9px; }
.own-title { display: flex; align-items: center; gap: 4px; }
.group { display: flex; height: 24px; }
.group button { border: 1px solid #535158; width: 24px; display: flex; align-items: center; justify-content: center; color: #bfbfc3; }
.group .edit { border-radius: 4px 0 0 4px; }
.group .pause { border-left: 0; width: 22px; }
.group .remove { width: auto; padding: 0 7px; background: #ec5941; border-color: #f57f6c; border-radius: 0 4px 4px 0; color: #fff; }
.own-name { margin-top: 5px; }

.switch-label { display: block; font-weight: 700; margin-top: 14px; }
.switch { position: relative; display: block; width: 48px; height: 24px; margin-top: 6px; color: #89888d; }
.switch input { appearance: none; display: block; width: 48px; height: 24px; margin: 0; border-radius: 12px; background: radial-gradient(circle at 12px 12px, #434248 10px, #737278 10px); }
.switch .icon { position: absolute; left: 4px; top: 4px; pointer-events: none; }
.available { margin-top: 23px; }
.runners { list-style: none; margin-top: 13px; }
.runners li { padding-bottom: 15px; margin-bottom: 11px; border-bottom: 1px solid #4c4b51; }
.runner-id { display: flex; align-items: center; gap: 4px; }
.runner-name { margin: 5px 0 7px; line-height: 21px; }
.tag { display: block; width: fit-content; height: 16px; padding: 0 8px; border-radius: 8px; background: #064787; color: #9dc7f1; font-size: 12px; line-height: 16px; }
</style>
